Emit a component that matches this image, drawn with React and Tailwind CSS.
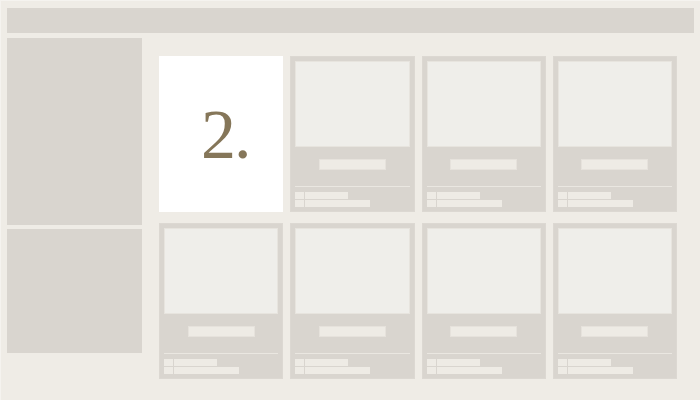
import React from 'react';

// Placeholder product card
function Card() {
  return (
    <div className="h-[156px] bg-[#d9d5cf] border border-[#dcd8d2] p-[4px] flex flex-col">
      <div className="h-[86px] bg-[#efeeea] border border-[#e7e4de]"></div>
      <div className="mt-[12px] mx-auto w-[67px] h-[11px] bg-[#eeebe5] border border-[#e6e2dc]"></div>
      <div className="mt-[16px] h-px bg-[#eae7e1]"></div>
      <div className="mt-[5px] flex flex-col gap-px">
        <div className="flex gap-px h-[7px]">
          <div className="w-[9px] bg-[#eeebe5]"></div>
          <div className="w-[43px] bg-[#eeebe5]"></div>
        </div>
        <div className="flex gap-px h-[7px]">
          <div className="w-[9px] bg-[#eeebe5]"></div>
          <div className="w-[65px] bg-[#eeebe5]"></div>
        </div>
      </div>
    </div>
  );
}

export default function App() {
  return (
    <div className="w-[700px] h-[400px] bg-[#efece6] border-l border-t border-[#f5f3ef] pl-[6px] pt-[7px] pr-[6px] flex flex-col overflow-hidden">
      <div className="h-[25px] bg-[#d9d5cf] shrink-0"></div>
      <div className="flex mt-[5px]">
        <div className="w-[135px] flex flex-col gap-[4px] shrink-0">
          <div className="h-[187px] bg-[#d9d5cf]"></div>
          <div className="h-[124px] bg-[#d9d5cf]"></div>
        </div>
        <div className="flex-1 pl-[17px] pr-[17px] pt-[18px]">
          <div className="grid grid-cols-4 gap-x-[7px] gap-y-[11px]">
            <div className="h-[156px] bg-white flex items-center justify-center">
              <span
                className="text-[70px] leading-none text-[#857659] pl-[8px] pt-[2px] tracking-[-2px]"
                style={{ fontFamily: '"Liberation Serif", "DejaVu Serif", serif' }}
              >
                2.
              </span>
            </div>
            <Card />
            <Card />
            <Card />
            <Card />
            <Card />
            <Card />
            <Card />
          </div>
        </div>
      </div>
    </div>
  );
}
